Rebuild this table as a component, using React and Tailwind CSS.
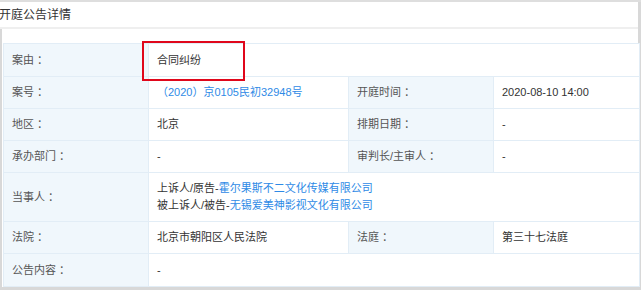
import React from "react";

const font = { fontFamily: '"Liberation Sans", "Noto Sans CJK SC", sans-serif' };

function L({ children, className = "" }) {
  return (
    <td className={"bg-[#f0f7fc] border border-[#e2edf6] pl-[8px] text-[#555] align-middle " + className}>
      {children}
      <span className="ml-[3px]">：</span>
    </td>
  );
}
function V({ children, colSpan, className = "" }) {
  return (
    <td colSpan={colSpan} className={"bg-white border border-[#e2edf6] pl-[8px] text-[#333] align-middle " + className}>
      {children}
    </td>
  );
}

export default function App() {
  return (
    <div style={font} className="w-[641px] h-[290px] bg-white overflow-hidden relative text-[11px]">
      <div className="h-[2px] bg-[#dedede]" />
      <div className="border-r-[3px] border-[#d8d8d8] h-[288px] flex flex-col">
        <div className="h-[25px] flex items-center text-[12px] text-[#333] -ml-[1px] leading-none">开庭公告详情</div>
        <div className="h-[2px] bg-[#efefef]" />
        <div className="flex-1 border-l-[2px] border-[#d8d8d8] pl-[1px] pt-[14px] border-b-[3px]">
          <table className="border-collapse table-fixed w-[636px]">
            <colgroup>
              <col className="w-[145px]" />
              <col className="w-[200px]" />
              <col className="w-[145px]" />
              <col className="w-[146px]" />
            </colgroup>
            <tbody>
              <tr className="h-[33px]">
                <L>案由</L>
                <V colSpan={3}>合同纠纷</V>
              </tr>
              <tr className="h-[32px]">
                <L>案号</L>
                <V><span className="text-[#2e8ae6]">（2020）京0105民初32948号</span></V>
                <L>开庭时间</L>
                <V>2020-08-10 14:00</V>
              </tr>
              <tr className="h-[32px]">
                <L>地区</L>
                <V>北京</V>
                <L>排期日期</L>
                <V>-</V>
              </tr>
              <tr className="h-[32px]">
                <L>承办部门</L>
                <V>-</V>
                <L>审判长/主审人</L>
                <V>-</V>
              </tr>
              <tr className="h-[49px]">
                <L>当事人</L>
                <V colSpan={3} className="leading-[17px]">
                  <div>上诉人/原告-<span className="text-[#2e8ae6]">霍尔果斯不二文化传媒有限公司</span></div>
                  <div>被上诉人/被告-<span className="text-[#2e8ae6]">无锡爱美神影视文化有限公司</span></div>
                </V>
              </tr>
              <tr className="h-[32px]">
                <L>法院</L>
                <V>北京市朝阳区人民法院</V>
                <L>法庭</L>
                <V>第三十七法庭</V>
              </tr>
              <tr className="h-[33px]">
                <L>公告内容</L>
                <V colSpan={3}>-</V>
              </tr>
            </tbody>
          </table>
        </div>
      </div>
      <div className="absolute left-[142px] top-[41px] w-[103px] h-[40px] border-2 border-[#e0071b]" />
    </div>
  );
}
